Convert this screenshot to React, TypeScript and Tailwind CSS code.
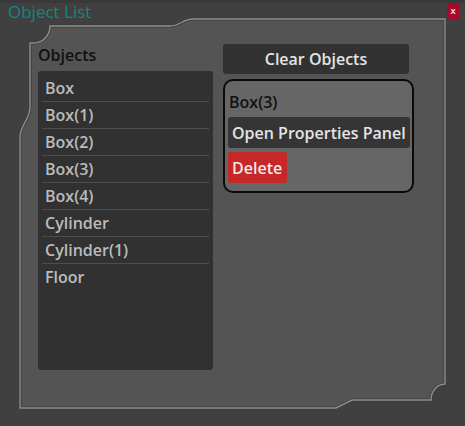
import React from "react"

const objects = ["Box", "Box(1)", "Box(2)", "Box(3)", "Box(4)", "Cylinder", "Cylinder(1)", "Floor"]

const framePath =
  "M20 408 L20 137 C20 125 30 120 30 107 L30 43 L34 43 A16 17 0 0 0 50 26 L170 26 C181 26 182 19 193 19 L445 19 L445 384 A14 16 0 0 0 431 400 L352 400 L336 408 Z"

// Decorative window frame with notched corners
function Frame() {
  return (
    <svg className="absolute inset-0 pointer-events-none" width={465} height={426} viewBox="0 0 465 426">
      <path d={framePath} fill="#545454" stroke="#3b3b3b" strokeWidth={3} />
      <path d={framePath} fill="none" stroke="#8e8e8e" strokeWidth={1.4} />
    </svg>
  )
}

export default function App() {
  return (
    <div
      className="relative w-[465px] h-[426px] bg-[#404040] overflow-hidden"
      style={{ fontFamily: '"Open Sans", "Noto Sans", sans-serif' }}
    >
      <Frame />
      <div className="relative flex flex-col">
        {/* title bar */}
        <div className="flex items-start justify-between h-[22px] pl-[8px] pr-[6px] border-t-[3px] border-[#393939]">
          <span className="text-[17px] leading-[17px] text-[#0b8a86]">Object List</span>
          <div className="w-[12px] h-[16px] bg-[#a30a2e] text-[9px] leading-[15px] text-center text-[#f2c7cf] font-bold">
            x
          </div>
        </div>

        <div className="flex gap-[10px] pl-[38px] pt-[22px]">
          {/* object list */}
          <div className="flex flex-col w-[175px]">
            <div className="h-[22px] leading-[22px] text-[16px] font-semibold text-[#111111]">Objects</div>
            <div className="mt-[5px] h-[299px] rounded-[3px] bg-[#313131] px-[4px] pt-[4px]">
              {objects.map((name) => (
                <div
                  key={name}
                  className="h-[27px] leading-[26px] pl-[3px] text-[16px] font-semibold text-[#bcbcbc] border-b border-[#4e4e4e] last:border-b-0"
                >
                  {name}
                </div>
              ))}
            </div>
          </div>

          {/* actions */}
          <div className="flex flex-col w-[191px]">
            <button className="w-[186px] h-[30px] rounded-[3px] bg-[#323232] text-[16px] font-semibold text-[#e4e4e4]">
              Clear Objects
            </button>
            <div className="mt-[5px] h-[114px] rounded-[10px] border-2 border-[#0a0a0a] bg-[#666666] px-[3px] pt-[10px]">
              <div className="h-[22px] leading-[22px] pl-[1px] text-[16px] font-semibold text-[#111111]">Box(3)</div>
              <button className="mt-[4px] w-[182px] h-[31px] rounded-[3px] bg-[#353535] px-[4px] text-left text-[16px] font-semibold text-[#e4e4e4] whitespace-nowrap">
                Open Properties Panel
              </button>
              <div>
                <button className="mt-[4px] w-[59px] h-[31px] rounded-[3px] bg-[#c62828] px-[4px] text-left text-[16px] font-semibold text-[#f3e6e6]">
                  Delete
                </button>
              </div>
            </div>
          </div>
        </div>
      </div>
    </div>
  )
}
